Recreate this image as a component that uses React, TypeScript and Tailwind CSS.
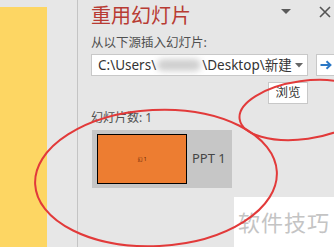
import React from "react";

const FONT = { fontFamily: '"Noto Sans", "Noto Sans CJK SC", sans-serif' };

export default function App() {
  return (
    <div
      className="relative w-[334px] h-[247px] overflow-hidden bg-[#e6e6e6] flex"
      style={FONT}
    >
      {/* slide area (yellow) */}
      <div className="w-[47px] pt-[7px] shrink-0">
        <div className="h-full bg-[#fdd663]" />
      </div>
      <div className="w-[31px] shrink-0 border-r border-[#c4c4c4] bg-[#e7e7e7]" />

      {/* reuse slides pane */}
      <div className="flex-1 flex flex-col pl-[13px]">
        <div className="flex items-center h-[30px] pt-[2px]">
          <span className="text-[20px] leading-[24px] text-[#b83b33] tracking-[0px]">
            重用幻灯片
          </span>
          <svg width="10" height="6" viewBox="0 0 10 6" className="ml-[90px] mt-[-8px]">
            <path d="M0 0 L10 0 L5 5 Z" fill="#5a5a5a" />
          </svg>
          <svg width="12" height="12" viewBox="0 0 12 12" className="ml-[28px] mt-[-8px]">
            <path d="M1 1 L11 11 M11 1 L1 11" stroke="#555" strokeWidth="1.6" />
          </svg>
        </div>
        <div className="mt-[5px] text-[12.5px] leading-[16px] text-[#505050]">
          从以下源插入幻灯片:
        </div>
        <div className="mt-[3px] flex items-center">
          <div className="w-[217px] h-[22px] bg-white border border-[#c8c8c8] flex items-center pl-[6px] pr-[4px] text-[13.5px] text-[#333] whitespace-nowrap overflow-hidden">
            <span>C:\Users\</span>
            <span className="w-[44px] h-[12px] mx-[1px] rounded-full bg-[#cfcfcf] blur-[3px]" />
            <span>\Desktop\新建</span>
            <svg width="8" height="5" viewBox="0 0 8 5" className="ml-auto">
              <path d="M0 0 L8 0 L4 4.5 Z" fill="#666" />
            </svg>
          </div>
          <div className="ml-[8px] w-[24px] h-[22px] bg-white border border-[#c8c8c8] flex items-center pl-[3px] shrink-0">
            <svg width="12" height="10" viewBox="0 0 12 10">
              <path d="M0.5 5 H10 M6.5 1.2 L10.5 5 L6.5 8.8" stroke="#2b78c5" strokeWidth="1.9" fill="none" />
            </svg>
          </div>
        </div>
        <div className="mt-[6px] flex">
          <div className="ml-[177px] w-[40px] h-[22px] bg-white border border-[#c8c8c8] flex items-center justify-center text-[12.5px] text-[#333]">
            浏览
          </div>
        </div>
        <div className="mt-[6px] text-[12px] leading-[16px] text-[#505050]">
          幻灯片数: 1
        </div>
        <div className="mt-[4px] ml-[1px] w-[140px] h-[58px] bg-[#c6c6c6] flex items-center pl-[5px]">
          <div className="w-[90px] h-[50px] bg-[#ed7d31] border border-black flex items-center justify-center">
            <span className="text-[5px] leading-none text-[#5a1a00]">幻 1</span>
          </div>
          <span className="ml-[5px] text-[13px] text-[#454545]">PPT 1</span>
        </div>
      </div>

      {/* watermark */}
      <div className="absolute left-[234px] top-[197px] w-[100px] h-[50px] bg-white flex items-center justify-center">
        <span className="text-[22px] text-[#c4c4c4] tracking-[1px]">软件技巧</span>
      </div>

      {/* hand-drawn red ellipses */}
      <svg className="absolute inset-0 pointer-events-none" width="334" height="247" viewBox="0 0 334 247">
        <ellipse cx="156" cy="178" rx="121" ry="68" fill="none" stroke="#e23a3a" strokeWidth="2" transform="rotate(-3 156 178)" />
        <ellipse cx="304" cy="110" rx="65" ry="29" fill="none" stroke="#e23a3a" strokeWidth="2" transform="rotate(-8 304 110)" />
      </svg>
    </div>
  );
}
